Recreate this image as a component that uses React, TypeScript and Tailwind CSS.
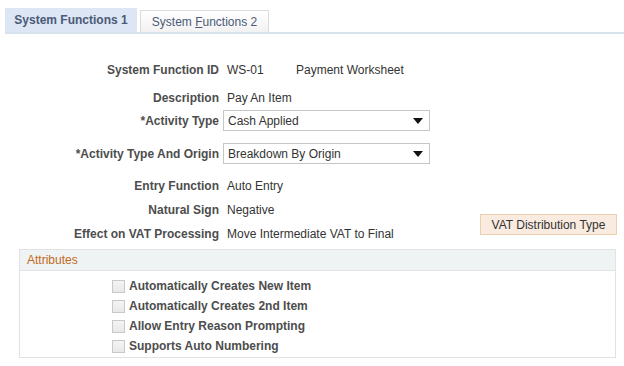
const fields = [
  { label: 'Entry Function', value: 'Auto Entry' },
  { label: 'Natural Sign', value: 'Negative' },
  { label: 'Effect on VAT Processing', value: 'Move Intermediate VAT to Final' },
];

const attributes = [
  'Automatically Creates New Item',
  'Automatically Creates 2nd Item',
  'Allow Entry Reason Prompting',
  'Supports Auto Numbering',
];

function Label({ children }: { children: React.ReactNode }) {
  return <div className="w-[227px] shrink-0 pr-[8px] text-right font-bold text-[#4d4d4d]">{children}</div>;
}

function Select({ value }: { value: string }) {
  return (
    <div className="-ml-[4px] flex h-[21px] w-[207px] items-center justify-between border border-[#c6c6c6] bg-white pl-[4px] pr-[6px]">
      <span>{value}</span>
      <svg width="10" height="6" viewBox="0 0 10 6">
        <path d="M0 0h10L5 6z" fill="#111" />
      </svg>
    </div>
  );
}

export default function App() {
  return (
    <div className="h-[366px] w-[624px] bg-white text-[12px] text-[#333] [font-family:'Liberation_Sans',Arial,sans-serif]">
      <div className="flex items-end pl-[5px] pt-[8px]">
        <div className="flex h-[24px] w-[132px] items-center justify-center bg-[#dde6f4] font-bold text-[#4a5a78]">
          System Functions 1
        </div>
        <div className="ml-[3px] flex h-[22px] w-[129px] items-center justify-center border border-b-0 border-[#dcdcdc] bg-gradient-to-b from-white to-[#f2f2f2] text-[#4a5a78]">
          <span>
            System <span className="underline">F</span>unctions 2
          </span>
        </div>
      </div>
      <div className="ml-[5px] h-[2px] bg-[#d8e2ef]" />

      <div className="mt-[29px] flex h-[14px] items-center">
        <Label>System Function ID</Label>
        <span className="w-[69px]">WS-01</span>
        <span>Payment Worksheet</span>
      </div>
      <div className="mt-[14px] flex h-[14px] items-center">
        <Label>Description</Label>
        <span>Pay An Item</span>
      </div>
      <div className="mt-[5px] flex items-center">
        <Label>*Activity Type</Label>
        <Select value="Cash Applied" />
      </div>
      <div className="mt-[12px] flex items-center">
        <Label>*Activity Type And Origin</Label>
        <Select value="Breakdown By Origin" />
      </div>

      <div className="mt-[15px] flex items-end">
        <div className="flex flex-col gap-[10px]">
          {fields.map((f) => (
            <div key={f.label} className="flex h-[14px] items-center">
              <Label>{f.label}</Label>
              <span>{f.value}</span>
            </div>
          ))}
        </div>
        <div className="mb-[6px] ml-auto mr-[7px] flex h-[21px] w-[137px] items-center justify-center border border-[#edcfb0] bg-[#f9ebe0]">
          VAT Distribution Type
        </div>
      </div>

      <div className="ml-[19px] mt-[8px] w-[597px] border border-[#e2e2e2]">
        <div className="flex h-[21px] items-center border-b border-[#e2e2e2] bg-[#f0f3f4] pl-[7px] text-[#c26a1c]">
          Attributes
        </div>
        <div className="flex flex-col gap-[6px] pb-[4px] pl-[92px] pt-[8px]">
          {attributes.map((a) => (
            <label key={a} className="flex h-[14px] items-center gap-[4px] font-bold text-[#4d4d4d]">
              <span className="h-[13px] w-[13px] border border-[#c8c8c8] bg-gradient-to-b from-[#f4f4f4] to-[#e8e8e8]" />
              {a}
            </label>
          ))}
        </div>
      </div>
    </div>
  );
}
